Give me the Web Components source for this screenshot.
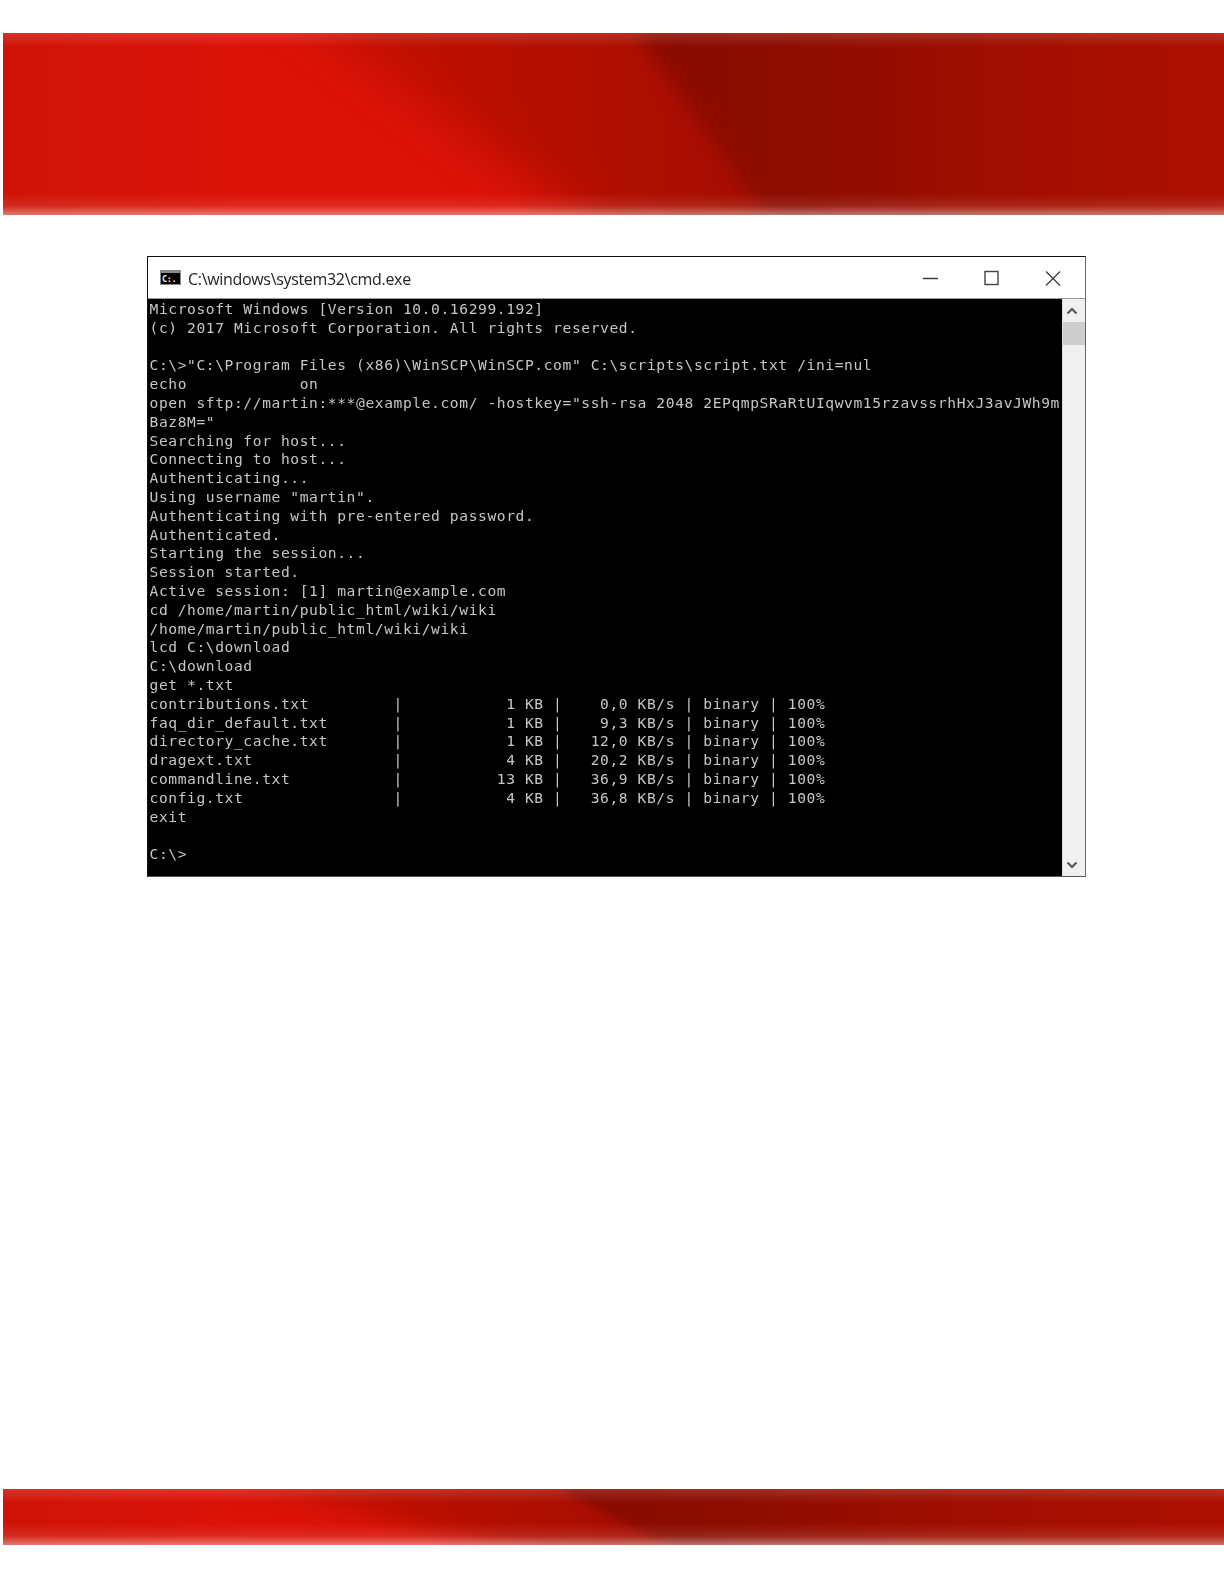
<!DOCTYPE html>
<html>
<head>
<meta charset="utf-8">
<title>cmd</title>
<style>
    html, body { margin: 0; padding: 0; background: #fff; }
    body { width: 1224px; height: 1584px; overflow: hidden; }
    pre { margin: 0; font: inherit; }
</style>
</head>
<body>
<doc-page>
    <red-band slot="top" height="182" mid="328,578" dark="638,765" blur="24"></red-band>
    <cmd-window slot="content" caption="C:\windows\system32\cmd.exe"><pre>Microsoft Windows [Version 10.0.16299.192]
(c) 2017 Microsoft Corporation. All rights reserved.

C:\&gt;"C:\Program Files (x86)\WinSCP\WinSCP.com" C:\scripts\script.txt /ini=nul
echo            on
open sftp://martin:***@example.com/ -hostkey="ssh-rsa 2048 2EPqmpSRaRtUIqwvm15rzavssrhHxJ3avJWh9m
Baz8M="
Searching for host...
Connecting to host...
Authenticating...
Using username "martin".
Authenticating with pre-entered password.
Authenticated.
Starting the session...
Session started.
Active session: [1] martin@example.com
cd /home/martin/public_html/wiki/wiki
/home/martin/public_html/wiki/wiki
lcd C:\download
C:\download
get *.txt
contributions.txt         |           1 KB |    0,0 KB/s | binary | 100%
faq_dir_default.txt       |           1 KB |    9,3 KB/s | binary | 100%
directory_cache.txt       |           1 KB |   12,0 KB/s | binary | 100%
dragext.txt               |           4 KB |   20,2 KB/s | binary | 100%
commandline.txt           |          13 KB |   36,9 KB/s | binary | 100%
config.txt                |           4 KB |   36,8 KB/s | binary | 100%
exit

C:\&gt;</pre></cmd-window>
    <red-band slot="bottom" height="56" mid="273,484" dark="560,665" blur="12"></red-band>
</doc-page>

<script>
// page frame: header band, content, footer band
class DocPage extends HTMLElement {
    constructor() {
        super();
        this.attachShadow({mode: 'open'});
        this.shadowRoot.innerHTML = `
            <style>
                :host {
                    display: flex;
                    flex-direction: column;
                    height: 1584px;
                    padding-top: 33px;
                    box-sizing: border-box;
                }
                #main {
                    flex: 1;
                    padding: 41px 0 0 147px;
                }
                #foot { padding-bottom: 39px; }
            </style>
            <slot name="top"></slot>
            <div id="main"><slot name="content"></slot></div>
            <div id="foot"><slot name="bottom"></slot></div>
        `;
    }
}

// blurred red banner. mid and dark give the x of each slanted edge at the
// top and bottom of the band, the polygons run on 60px past both ends
class RedBand extends HTMLElement {
    connectedCallback() {
        const h = +this.getAttribute('height');
        const [mt, mb] = this.getAttribute('mid').split(',').map(Number);
        const [dt, db] = this.getAttribute('dark').split(',').map(Number);
        const big = +this.getAttribute('blur');
        const ext = (a, b) => [a - (b - a) * 60 / h, b + (b - a) * 60 / h];
        const [m0, m1] = ext(mt, mb);
        const [d0, d1] = ext(dt, db);
        this.attachShadow({mode: 'open'});
        this.shadowRoot.innerHTML = `
            <style>
                :host {
                    display: block;
                    margin-left: 3px;
                    width: 1221px;
                    height: ${h}px;
                    overflow: hidden;
                    position: relative;
                    background: linear-gradient(to right, #cf1306, #dc1208 20%);
                }
                svg {
                    position: absolute;
                    left: -3px;
                    top: -60px;
                    overflow: visible;
                }
                #mid { filter: blur(${big}px); }
                #dark { filter: blur(${big / 2.4}px); }
                #fade {
                    position: absolute;
                    inset: 0;
                    background:
                        linear-gradient(to bottom, rgba(255,255,255,.14), rgba(255,255,255,0) 14px),
                        linear-gradient(to top, rgba(255,255,255,.42), rgba(255,255,255,.1) 9px, rgba(255,255,255,0) 22px);
                }
            </style>
            <svg id="mid" width="1300" height="${h + 120}" viewBox="0 0 1300 ${h + 120}">
                <defs>
                    <linearGradient id="midfill" gradientUnits="userSpaceOnUse" x1="${mt}" x2="${db}" y1="60" y2="60">
                        <stop offset="0" stop-color="#c41000"/>
                        <stop offset="1" stop-color="#a40e00"/>
                    </linearGradient>
                </defs>
                <polygon points="${m0},0 ${d0 + 60},0 ${d1 + 60},${h + 120} ${m1},${h + 120}" fill="url(#midfill)"/>
            </svg>
            <svg id="dark" width="1300" height="${h + 120}" viewBox="0 0 1300 ${h + 120}">
                <defs>
                    <linearGradient id="darkfill" gradientUnits="userSpaceOnUse" x1="${dt}" x2="1224" y1="60" y2="60">
                        <stop offset="0" stop-color="#880b00"/>
                        <stop offset=".25" stop-color="#8c0c00"/>
                        <stop offset=".6" stop-color="#9f0e00"/>
                        <stop offset="1" stop-color="#ad0f00"/>
                    </linearGradient>
                </defs>
                <polygon points="${d0},0 1340,0 1340,${h + 120} ${d1},${h + 120}" fill="url(#darkfill)"/>
            </svg>
            <div id="fade"></div>
        `;
    }
}

// console window, terminal text comes through the slot
class CmdWindow extends HTMLElement {
    connectedCallback() {
        this.attachShadow({mode: 'open'});
        this.shadowRoot.innerHTML = `
            <style>
                :host {
                    display: block;
                    width: 939px;
                    box-sizing: border-box;
                    border: 1px solid #111;
                    border-right-color: #666;
                    border-bottom-color: #555;
                    background: #fff;
                }
                #bar {
                    display: flex;
                    align-items: center;
                    height: 42px;
                    border-bottom: 1px solid #999;
                    box-sizing: border-box;
                    padding-left: 12px;
                    font: 16px "Open Sans", sans-serif;
                    letter-spacing: -.32px;
                    color: #222;
                }
                #caption { margin-left: 7px; flex: 1; filter: blur(.3px); position: relative; top: 1px; }
                #btns { display: flex; }
                #btns svg { display: block; width: 61px; height: 41px; }
                #body { display: flex; height: 577px; }
                #term {
                    flex: 1;
                    min-width: 0;
                    overflow: hidden;
                    background: #000;
                    color: #c6c6c6;
                    padding: 1px 0 0 1.5px;
                    font: 14.6px/18.8px "DejaVu Sans Mono", monospace;
                    letter-spacing: .6px;
                }
                #term slot { display: block; filter: blur(.4px); }
                #scroll {
                    width: 23px;
                    background: #f0f0f0;
                    display: flex;
                    flex-direction: column;
                    border-left: 1px solid #ddd;
                    box-sizing: border-box;
                }
                #scroll svg { display: block; width: 22px; height: 23px; flex: none; }
                #thumb { height: 23px; background: #cdcdcd; flex: none; }
                #rest { flex: 1; }
            </style>
            <div id="bar">
                <svg width="21" height="15" viewBox="0 0 21 15">
                    <rect width="21" height="15" fill="#8a8a8a"/>
                    <rect x="1" y="3" width="19" height="11" fill="#000"/>
                    <text x="2" y="11.8" font-family="DejaVu Sans Mono" font-size="8.5" font-weight="bold" fill="#f0f0f0">C:\.</text>
                </svg>
                <span id="caption">${this.getAttribute('caption')}</span>
                <div id="btns">
                    <svg viewBox="0 0 61 41"><path d="M21 21.5h15" stroke="#333" stroke-width="1.4"/></svg>
                    <svg viewBox="0 0 61 41"><rect x="22" y="14.5" width="13" height="13" fill="none" stroke="#444" stroke-width="1.4"/></svg>
                    <svg viewBox="0 0 61 41"><path d="M22 14.5l14 14M36 14.5l-14 14" stroke="#444" stroke-width="1.4" fill="none"/></svg>
                </div>
            </div>
            <div id="body">
                <div id="term"><slot></slot></div>
                <div id="scroll">
                    <svg viewBox="0 0 22 23"><path d="M4.5 14.5l4.5-4.5 4.5 4.5" fill="none" stroke="#555" stroke-width="2.2"/></svg>
                    <div id="thumb"></div>
                    <div id="rest"></div>
                    <svg viewBox="0 0 22 23"><path d="M4.5 9.5l4.5 4.5 4.5-4.5" fill="none" stroke="#555" stroke-width="2.2"/></svg>
                </div>
            </div>
        `;
    }
}

customElements.define('doc-page', DocPage);
customElements.define('red-band', RedBand);
customElements.define('cmd-window', CmdWindow);
</script>
</body>
</html>
